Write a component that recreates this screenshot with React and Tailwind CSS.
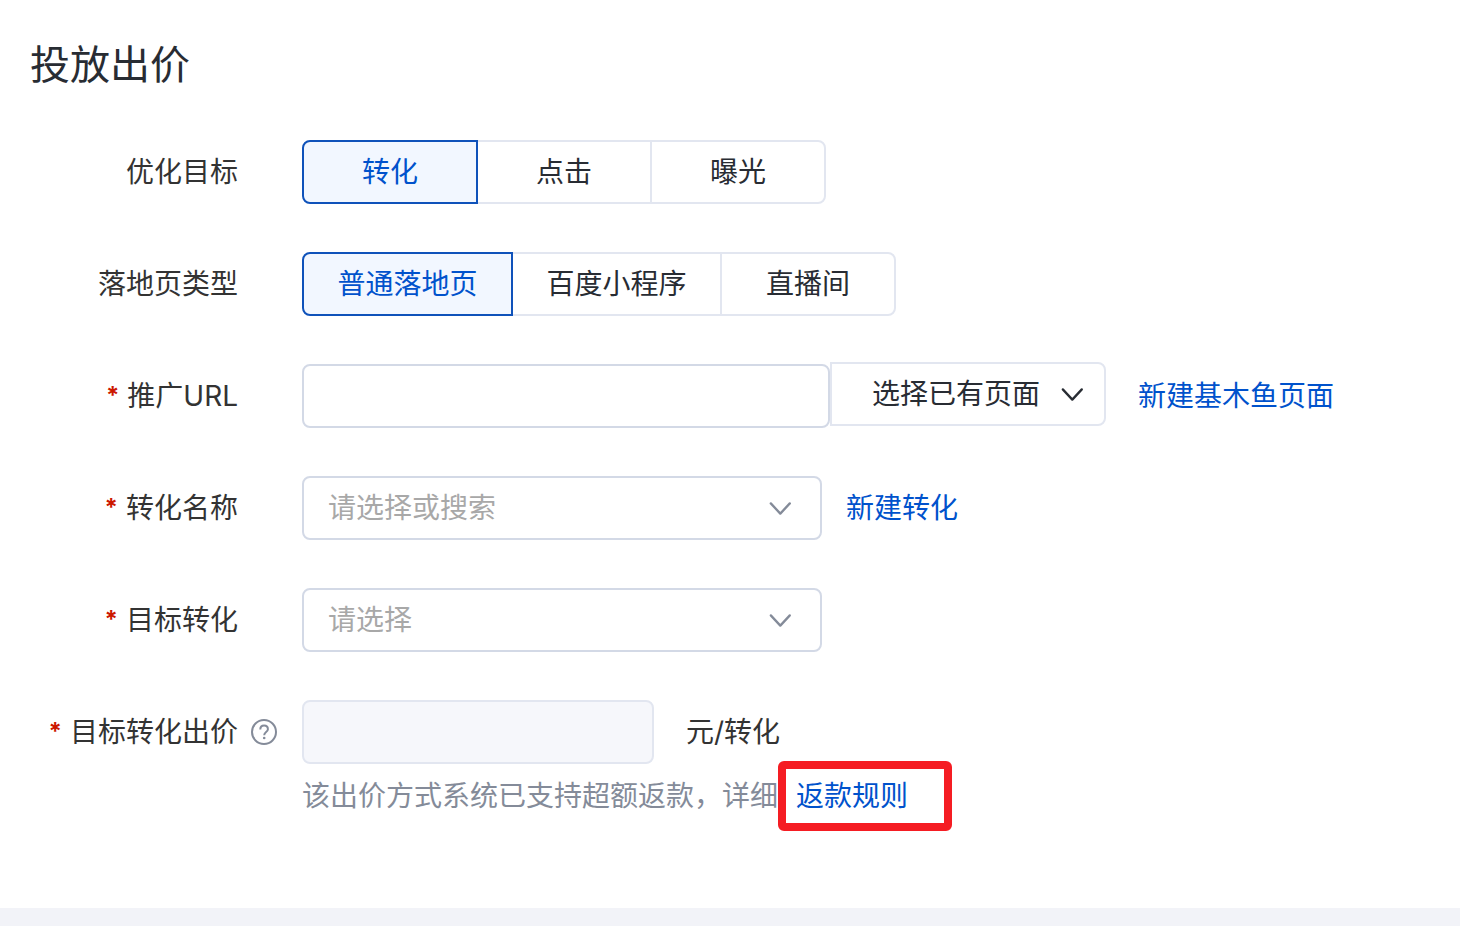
import React, { useState } from "react";

const goals = [
  { text: "转化", width: "w-44" },
  { text: "点击", width: "w-44" },
  { text: "曝光", width: "w-44" },
];

const pageTypes = [
  { text: "普通落地页", width: "w-[211px]" },
  { text: "百度小程序", width: "w-[211px]" },
  { text: "直播间", width: "w-44" },
];

function Chevron({ className = "" }) {
  return (
    <svg
      viewBox="0 0 24 24"
      fill="none"
      stroke="currentColor"
      strokeWidth="2.3"
      strokeLinecap="round"
      strokeLinejoin="round"
      className={`w-6 h-6 shrink-0 ${className}`}
      aria-hidden="true"
    >
      <path d="M2.8 7.4 12.3 17.6 21.8 7.4" />
    </svg>
  );
}

function HelpIcon() {
  return (
    <svg
      viewBox="0 0 28 28"
      fill="none"
      stroke="currentColor"
      strokeWidth="2"
      className="w-7 h-7"
      aria-hidden="true"
    >
      <circle cx="14" cy="14" r="12" />
      <path d="M10.3 11.6c0-2.5 1.6-4 3.8-4s3.8 1.5 3.8 3.6c0 2.9-3.7 2.9-3.7 6" />
      <circle cx="14.2" cy="20" r="1.3" fill="currentColor" stroke="none" />
    </svg>
  );
}

function Row({ label, htmlFor, required, extra, children }) {
  const Label = htmlFor ? "label" : "span";
  return (
    <div className="flex items-center h-16">
      <Label
        htmlFor={htmlFor}
        className="flex justify-end gap-2 w-52 shrink-0 whitespace-nowrap"
      >
        {required && (
          <span className="font-bold text-2xl leading-10 text-[#cc1800]">*</span>
        )}
        {label}
      </Label>
      <div className="w-16 shrink-0 flex pl-3 text-[#848b99]">{extra}</div>
      {children}
    </div>
  );
}

function Segmented({ options, label }) {
  const [active, setActive] = useState(0);

  return (
    <div className="flex" role="group" aria-label={label}>
      {options.map((option, i) => (
        <button
          key={option.text}
          type="button"
          aria-pressed={i === active}
          onClick={() => setActive(i)}
          className={`h-16 border-2 -ml-[2px] first:ml-0 first:rounded-l-lg last:rounded-r-lg ${option.width} ${
            i === active
              ? "relative border-[#0f52ba] bg-[#f2f7ff] text-[#0052cc]"
              : "border-[#e2e6f0] bg-white text-[#282c33]"
          }`}
        >
          {option.text}
        </button>
      ))}
    </div>
  );
}

function SelectBox({ id, placeholder }) {
  return (
    <div className="grid items-center w-[520px]">
      <select
        id={id}
        defaultValue=""
        className="col-start-1 row-start-1 appearance-none w-full h-16 border-2 border-[#d3d9e6] rounded-lg bg-white pl-6 pr-16 text-[#a8a8a8]"
      >
        <option value="">{placeholder}</option>
      </select>
      <Chevron className="col-start-1 row-start-1 justify-self-end mr-[30px] pointer-events-none text-[#848b99]" />
    </div>
  );
}

function TextLink({ children, className = "" }) {
  return (
    <a href="#" className={`text-[#0052cc] whitespace-nowrap ${className}`}>
      {children}
    </a>
  );
}

export default function App() {
  return (
    <div className="min-h-screen bg-[#f2f3f8] font-[Inter,'Noto_Sans_CJK_SC',sans-serif] text-[28px] leading-10 text-[#333333]">
      <main className="bg-white px-[30px] pt-8 pb-20">
        <h1 className="text-[40px] leading-[66px] text-[#282c33]">投放出价</h1>

        <form className="flex flex-col gap-12 mt-[42px]">
          <Row label="优化目标">
            <Segmented options={goals} label="优化目标" />
          </Row>

          <Row label="落地页类型">
            <Segmented options={pageTypes} label="落地页类型" />
          </Row>

          <Row label="推广URL" htmlFor="url" required>
            <input
              id="url"
              type="text"
              className="w-[528px] h-16 border-2 border-[#d3d9e6] rounded-lg px-6"
            />
            <button
              type="button"
              className="flex items-center justify-end gap-5 w-[276px] h-16 -mt-1 border-2 border-[#e2e6f0] rounded-r-lg pr-5 text-[#282c33] whitespace-nowrap"
            >
              选择已有页面
              <Chevron />
            </button>
            <TextLink className="ml-8">新建基木鱼页面</TextLink>
          </Row>

          <Row label="转化名称" htmlFor="name" required>
            <SelectBox id="name" placeholder="请选择或搜索" />
            <TextLink className="ml-6">新建转化</TextLink>
          </Row>

          <Row label="目标转化" htmlFor="target" required>
            <SelectBox id="target" placeholder="请选择" />
          </Row>

          <div>
            <Row label="目标转化出价" htmlFor="bid" required extra={<HelpIcon />}>
              <input
                id="bid"
                type="text"
                disabled
                className="w-[352px] h-16 border-2 border-[#e2e6f0] rounded-lg bg-[#f6f7fb] px-6"
              />
              <span className="ml-8">元/转化</span>
            </Row>
            <p className="flex pl-[272px] leading-[64px] text-[#848b99] whitespace-nowrap">
              该出价方式系统已支持超额返款，详细
              <span className="relative ml-[18px]">
                <TextLink>返款规则</TextLink>
                <span className="absolute -left-[18px] -right-11 -inset-y-[3px] border-8 border-[#f51d23] rounded-md pointer-events-none" />
              </span>
            </p>
          </div>
        </form>
      </main>
    </div>
  );
}
